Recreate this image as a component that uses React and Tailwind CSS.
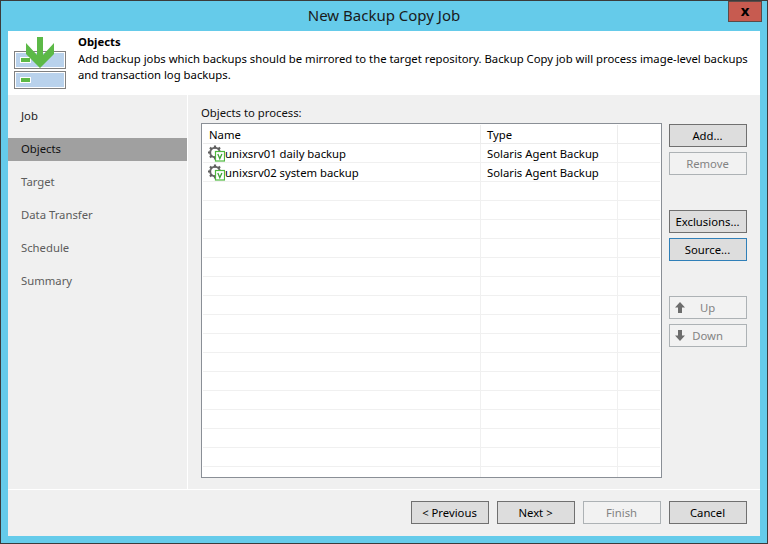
import React from 'react';

const font = { fontFamily: '"Noto Sans", "Open Sans", sans-serif' };

const steps = ['Job', 'Objects', 'Target', 'Data Transfer', 'Schedule', 'Summary'];
const jobs = [
    { name: 'unixsrv01 daily backup', type: 'Solaris Agent Backup' },
    { name: 'unixsrv02 system backup', type: 'Solaris Agent Backup' },
];

function HeaderIcon() {
    return (
        <svg width="52" height="52" viewBox="0 0 52 52" className="block shrink-0" shapeRendering="crispEdges">
            <rect x="0.5" y="14.5" width="51" height="17" fill="#b9d2ec" stroke="#808080" />
            <rect x="1.5" y="15.5" width="49" height="15" fill="none" stroke="#ffffff" />
            <rect x="0.5" y="34.5" width="51" height="17" fill="#b9d2ec" stroke="#808080" />
            <rect x="1.5" y="35.5" width="49" height="15" fill="none" stroke="#ffffff" />
            <rect x="6.5" y="20.5" width="10" height="5" fill="#5cb947" stroke="#ffffff" />
            <rect x="6.5" y="40.5" width="10" height="5" fill="#5cb947" stroke="#ffffff" />
            <path d="M23 0h6v18L40 6v11L26 31 12 17V6l11 12z" fill="#5cb947" shapeRendering="auto" />
        </svg>
    );
}

function JobIcon() {
    return (
        <svg width="17" height="17" viewBox="0 0 17 17" className="block shrink-0">
            <circle cx="7" cy="7.5" r="4.8" fill="none" stroke="#6a6a6a" strokeWidth="2" />
            <path d="M7 0.5v3M7 11.5v3M0 7.5h3M11 7.5h3M2 2.5l2 2M10 10.5l2 2M12 2.5l-2 2M4 10.5l-2 2" stroke="#5f5f5f" strokeWidth="2.2" />
            <rect x="7.5" y="6.5" width="9" height="9.5" fill="#ffffff" stroke="#4fb83f" strokeWidth="1.2" />
            <path d="M9.8 9l2 4.6L13.9 9" fill="none" stroke="#3fa535" strokeWidth="1.3" />
        </svg>
    );
}

function Arrow({ down }) {
    return (
        <svg width="10" height="11" viewBox="0 0 10 11" className={`block ${down ? 'rotate-180' : ''}`}>
            <path d="M5 0l5 5.5H7V11H3V5.5H0z" fill="#6d6d6d" />
        </svg>
    );
}

function Btn({ children, disabled, focused, className = '' }) {
    let tone = 'border-[#707070] bg-[#dddddd] text-black';
    if (disabled) tone = 'border-[#adb2b5] bg-[#f2f2f2] text-[#838383]';
    if (focused) tone = 'border-[#2f7fb8] bg-[#dddddd] text-black';
    return (
        <div className={`relative flex h-[23px] w-[78px] shrink-0 items-center justify-center border pr-px text-[11.3px] leading-none ${tone} ${className}`}>
            {children}
        </div>
    );
}

export default function App() {
    return (
        <div style={font} className="flex h-[544px] w-[768px] flex-col overflow-hidden border border-[#3b3b3b] bg-[#65cbea] text-[11.3px] text-black">
            <div className="relative flex h-[30px] shrink-0 items-center justify-center pb-[1px] text-[15px] text-[#1a1a1a]">
                New Backup Copy Job
                <div className="absolute right-[5px] top-0 flex h-[21px] w-[34px] items-center justify-center border border-[#5b4a48] bg-[#c75b50] pb-[3px] text-[15px] font-bold leading-[15px] text-black">
                    x
                </div>
            </div>

            <div className="mx-[7px] mb-[7px] flex min-h-0 flex-1 flex-col bg-[#f0f0f0]">
                <div className="flex h-[64px] shrink-0 bg-white">
                    <div className="w-[70px] shrink-0 pl-[6px] pt-[6px]">
                        <HeaderIcon />
                    </div>
                    <div className="pt-[3px] leading-[16.5px]">
                        <div className="font-bold">Objects</div>
                        <div className="whitespace-nowrap">Add backup jobs which backups should be mirrored to the target repository. Backup Copy job will process image-level backups</div>
                        <div>and transaction log backups.</div>
                    </div>
                </div>

                <div className="flex min-h-0 flex-1">
                    <div className="flex w-[179px] shrink-0 flex-col gap-[10px] pt-[10px]">
                        {steps.map((step) => (
                            <div
                                key={step}
                                className={`flex h-[23px] items-center pl-[13px] ${step === 'Objects' ? 'bg-[#a0a0a0] text-[#111111]' : step === 'Job' ? 'text-[#222222]' : 'text-[#5c5c5c]'}`}
                            >
                                {step}
                            </div>
                        ))}
                    </div>
                    <div className="w-px shrink-0 bg-white" />
                    <div className="flex min-w-0 flex-1 pl-[13px] pt-[10px]">
                        <div className="flex w-[461px] shrink-0 flex-col">
                            <div className="h-[18px] leading-[16px] text-[#111111]">Objects to process:</div>
                            <div className="h-[355px] overflow-hidden border border-[#8a8f96] bg-white p-px">
                                <div className="flex h-[19px] border-b border-[#ececec] leading-[20px]">
                                    <div className="w-[278px] border-r border-[#ececec] pl-[6px]">Name</div>
                                    <div className="w-[137px] border-r border-[#ececec] pl-[6px]">Type</div>
                                </div>
                                {Array.from({ length: 18 }).map((_, i) => (
                                    <div key={i} className="flex h-[19px] w-[457px] border-b border-[#f0f0f0] leading-[20px]">
                                        <div className="flex w-[278px] items-center border-r border-[#f0f0f0] pl-[5px]">
                                            {jobs[i] && <JobIcon />}
                                            {jobs[i] && <span className="pt-[2px]">{jobs[i].name}</span>}
                                        </div>
                                        <div className="w-[137px] border-r border-[#f0f0f0] pl-[6px]">{jobs[i] && jobs[i].type}</div>
                                    </div>
                                ))}
                            </div>
                        </div>
                        <div className="ml-[7px] flex flex-col pt-[19px]">
                            <Btn>Add...</Btn>
                            <Btn disabled className="mt-[5px]">Remove</Btn>
                            <Btn className="mt-[35px]">Exclusions...</Btn>
                            <Btn focused className="mt-[5px]">Source...</Btn>
                            <Btn disabled className="mt-[35px]">
                                <span className="absolute left-[5px] top-[5px]"><Arrow /></span>
                                Up
                            </Btn>
                            <Btn disabled className="mt-[5px]">
                                <span className="absolute left-[5px] top-[5px]"><Arrow down /></span>
                                Down
                            </Btn>
                        </div>
                    </div>
                </div>

                <div className="flex h-[47px] shrink-0 items-start justify-end gap-2 border-t border-white pr-[13px] pt-[11px]">
                    <Btn>&lt; Previous</Btn>
                    <Btn>Next &gt;</Btn>
                    <Btn disabled>Finish</Btn>
                    <Btn>Cancel</Btn>
                </div>
            </div>
        </div>
    );
}
